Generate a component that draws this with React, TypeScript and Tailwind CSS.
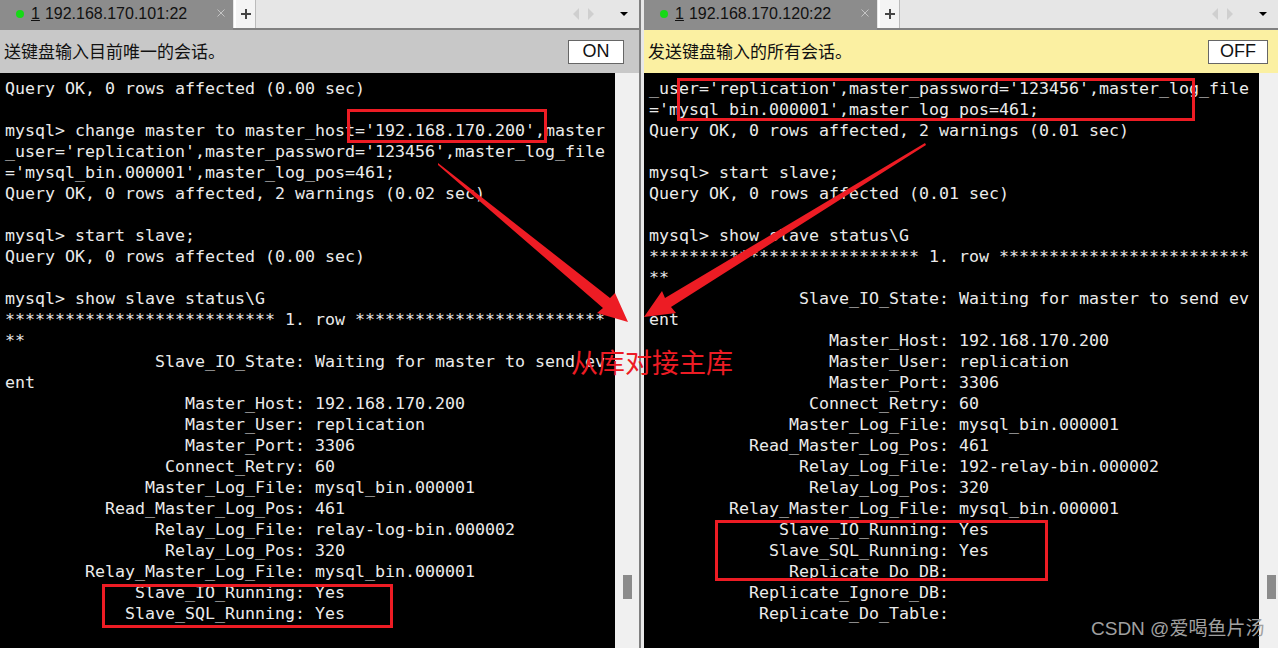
import React from 'react';

const leftLines = [
  'Query OK, 0 rows affected (0.00 sec)',
  '',
  "mysql> change master to master_host='192.168.170.200',master",
  "_user='replication',master_password='123456',master_log_file",
  "='mysql_bin.000001',master_log_pos=461;",
  'Query OK, 0 rows affected, 2 warnings (0.02 sec)',
  '',
  'mysql> start slave;',
  'Query OK, 0 rows affected (0.00 sec)',
  '',
  'mysql> show slave status\\G',
  '*************************** 1. row *************************',
  '**',
  '               Slave_IO_State: Waiting for master to send ev',
  'ent',
  '                  Master_Host: 192.168.170.200',
  '                  Master_User: replication',
  '                  Master_Port: 3306',
  '                Connect_Retry: 60',
  '              Master_Log_File: mysql_bin.000001',
  '          Read_Master_Log_Pos: 461',
  '               Relay_Log_File: relay-log-bin.000002',
  '                Relay_Log_Pos: 320',
  '        Relay_Master_Log_File: mysql_bin.000001',
  '             Slave_IO_Running: Yes',
  '            Slave_SQL_Running: Yes',
];

const rightLines = [
  "_user='replication',master_password='123456',master_log_file",
  "='mysql_bin.000001',master_log_pos=461;",
  'Query OK, 0 rows affected, 2 warnings (0.01 sec)',
  '',
  'mysql> start slave;',
  'Query OK, 0 rows affected (0.01 sec)',
  '',
  'mysql> show slave status\\G',
  '*************************** 1. row *************************',
  '**',
  '               Slave_IO_State: Waiting for master to send ev',
  'ent',
  '                  Master_Host: 192.168.170.200',
  '                  Master_User: replication',
  '                  Master_Port: 3306',
  '                Connect_Retry: 60',
  '              Master_Log_File: mysql_bin.000001',
  '          Read_Master_Log_Pos: 461',
  '               Relay_Log_File: 192-relay-bin.000002',
  '                Relay_Log_Pos: 320',
  '        Relay_Master_Log_File: mysql_bin.000001',
  '             Slave_IO_Running: Yes',
  '            Slave_SQL_Running: Yes',
  '              Replicate_Do_DB:',
  '          Replicate_Ignore_DB:',
  '           Replicate_Do_Table:',
];

interface PaneProps {
  host: string;
  message: string;
  toggle: string;
  lines: string[];
  barClass: string;
  toggleClass: string;
  className: string;
}

const Pane: React.FC<PaneProps> = ({ host, message, toggle, lines, barClass, toggleClass, className }) => {
  return (
    <div className={`flex flex-col h-full ${className}`}>
      <div className="h-[30px] flex flex-shrink-0 bg-[#e6e6e6]">
        <div className="w-[233px] h-full bg-[#8c8c8c] flex items-center pl-4 pb-[2px] relative text-[#111] text-[16px] font-['Liberation_Sans','Noto_Sans_CJK_SC',sans-serif]">
          <span className="w-2 h-2 rounded-full bg-[#16d916]" />
          <span className="ml-[7px] underline">1</span>
          <span className="ml-[5px]">{host}</span>
          <svg className="absolute left-[217px] top-[9px]" width="8" height="8" viewBox="0 0 8 8">
            <path d="M0.5 0.5L7.5 7.5M7.5 0.5L0.5 7.5" stroke="#c4c4c4" strokeWidth="1" fill="none" />
          </svg>
        </div>
        <div className="flex-1 flex flex-col">
          <div className="flex-1 flex items-center">
            <div className="w-[22px] h-full ml-[1px] bg-[#f4f4f4] border-l-2 border-r border-l-white border-r-[#bbbbbb] flex items-center justify-center">
              <svg width="10" height="10" viewBox="0 0 10 10">
                <path d="M5 0V10M0 5H10" stroke="#444444" strokeWidth="2" fill="none" />
              </svg>
            </div>
            <div className="flex-1" />
            <div className="flex items-center gap-[9px] mr-[11px]">
              <span className="w-0 h-0 border-y-[6px] border-y-transparent border-r-[6px] border-r-[#cfcfcf]" />
              <span className="w-0 h-0 border-y-[6px] border-y-transparent border-l-[6px] border-l-[#cfcfcf]" />
              <span className="ml-[17px] w-0 h-0 border-x-[4px] border-x-transparent border-t-[4px] border-t-black" />
            </div>
          </div>
          <div className="h-[2px] bg-[#808080]" />
        </div>
      </div>
      <div className={`h-[43px] flex items-center justify-between pl-1 flex-shrink-0 ${barClass}`}>
        <span className="text-[17px] text-[#111]">{message}</span>
        <span className={`h-6 bg-white border border-[#666666] flex items-center justify-center text-[18px] text-[#111] font-['Liberation_Sans',sans-serif] ${toggleClass}`}>
          {toggle}
        </span>
      </div>
      <div className="flex-1 flex min-h-0">
        <div className="w-[615px] bg-black overflow-hidden pt-[5px] pl-[5px] text-[#ebebeb] text-[16.61px] leading-[21px] font-['DejaVu_Sans_Mono',monospace]">
          {lines.map((line, i) => (
            <div key={i} className="h-[21px] whitespace-pre">{line}</div>
          ))}
        </div>
        <div className="flex-1 bg-[#f0f0f0] relative">
          <div className="absolute left-2 top-[502px] w-[9px] h-6 bg-[#8b8b8b]" />
        </div>
      </div>
    </div>
  );
};

export default function App() {
  return (
    <div className="w-[1278px] h-[648px] overflow-hidden relative flex bg-[#f0f0f0] font-['Open_Sans','Noto_Sans_CJK_SC',sans-serif]">
      <Pane
        host="192.168.170.101:22"
        message="送键盘输入目前唯一的会话。"
        toggle="ON"
        lines={leftLines}
        barClass="bg-[#c8c8c8] pr-[15px]"
        toggleClass="w-[56px]"
        className="w-[639px]"
      />
      <div className="w-[5px] h-full flex-shrink-0 bg-[#e8e8e8] border-l-2 border-[#808080]" />
      <Pane
        host="192.168.170.120:22"
        message="发送键盘输入的所有会话。"
        toggle="OFF"
        lines={rightLines}
        barClass="bg-[#fbf0a2] pr-[10px]"
        toggleClass="w-[60px]"
        className="w-[634px]"
      />

      {/* annotations drawn on top of the screenshot */}
      <div className="absolute left-[347px] top-[109px] w-[200px] h-[34px] border-[3px] border-[#ed1c24]" />
      <div className="absolute left-[102px] top-[584px] w-[291px] h-[44px] border-[3px] border-[#ed1c24]" />
      <div className="absolute left-[677px] top-[78px] w-[518px] h-[43px] border-[3px] border-[#ed1c24]" />
      <div className="absolute left-[715px] top-[520px] w-[333px] h-[61px] border-[3px] border-[#ed1c24]" />
      <svg className="absolute left-0 top-0" width="1278" height="648" viewBox="0 0 1278 648">
        <polygon points="438,163 610,298 615,293 628,322 597,313 603,308 438,165" fill="#ed1c24" />
        <polygon points="925,143 665,298 662,291 644,317 676,313 671,307 926,145" fill="#ed1c24" />
      </svg>
      <span className="absolute left-[571px] top-[346px] text-[#ed1c24] text-[27px] leading-[34px]">从库对接主库</span>
      <span className="absolute left-[1091px] top-[616px] text-[#a0a0a0] text-[19px] leading-[26px] font-['Liberation_Sans','Noto_Sans_CJK_SC',sans-serif]">CSDN @爱喝鱼片汤</span>
    </div>
  );
}
